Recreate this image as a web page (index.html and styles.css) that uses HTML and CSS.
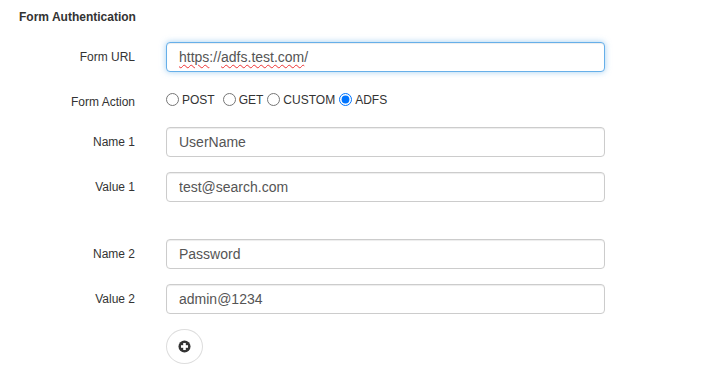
FILE: index.html
```html
<!DOCTYPE html>
<html>
<head>
    <title>Form Authentication</title>
    <link rel="stylesheet" href="styles.css">
</head>
<body>
    <div class="panel">
        <h4 class="panel-title">Form Authentication</h4>

        <div class="form-row">
            <label class="control-label">Form URL</label>
            <div class="form-control focused">
                <span class="misspelled">https</span>://<span class="misspelled">adfs.test.com</span>/
            </div>
        </div>

        <div class="form-row radio-row">
            <label class="control-label action-label">Form Action</label>
            <div class="radios">
                <label class="radio-inline"><input type="radio" name="action"> POST</label>
                <label class="radio-inline"><input type="radio" name="action">GET</label>
                <label class="radio-inline"><input type="radio" name="action">CUSTOM</label>
                <label class="radio-inline"><input type="radio" name="action" checked>ADFS</label>
            </div>
        </div>

        <div class="form-row">
            <label class="control-label">Name 1</label>
            <input class="form-control" type="text" value="UserName">
        </div>
        <div class="form-row pair-end">
            <label class="control-label">Value 1</label>
            <input class="form-control" type="text" value="test@search.com">
        </div>

        <div class="form-row">
            <label class="control-label">Name 2</label>
            <input class="form-control" type="text" value="Password">
        </div>
        <div class="form-row">
            <label class="control-label">Value 2</label>
            <input class="form-control" type="text" value="admin@1234">
        </div>

        <div class="form-row">
            <span></span>
            <div>
                <button class="add-button" type="button">
                    <svg width="13" height="13" viewBox="0 0 14 14">
                        <circle cx="7" cy="7" r="6.5" fill="#333"/>
                        <rect x="5.6" y="3.2" width="2.8" height="7.6" fill="#fff"/>
                        <rect x="3.2" y="5.6" width="7.6" height="2.8" fill="#fff"/>
                    </svg>
                </button>
            </div>
        </div>
    </div>
</body>
</html>
```

FILE: styles.css
```css
body {
    margin: 0;
    padding: 0;
    background: #fff;
    font-family: "Liberation Sans", Arial, sans-serif;
    color: #333;
}

.panel {
    padding: 8px 0 0 19px;
}

.panel-title {
    margin: 0 0 16px;
    font-size: 12px;
    line-height: 18px;
    font-weight: bold;
}

.form-row {
    display: grid;
    grid-template-columns: 116px 439px;
    column-gap: 31px;
    align-items: center;
    margin-bottom: 15px;
}

.pair-end {
    margin-bottom: 37px;
}

.control-label {
    text-align: right;
    font-size: 12px;
}

.form-control {
    box-sizing: border-box;
    width: 100%;
    height: 30px;
    padding: 0 12px;
    border: 1px solid #ccc;
    border-radius: 4px;
    font-family: "Liberation Sans", Arial, sans-serif;
    font-size: 14px;
    line-height: 28px;
    color: #555;
    background: #fff;
    box-shadow: inset 0 1px 1px rgba(0, 0, 0, 0.075);
}

.form-control.focused {
    border-color: #66afe9;
    box-shadow: inset 0 1px 1px rgba(0, 0, 0, 0.075), 0 0 6px rgba(102, 175, 233, 0.6);
}

.misspelled {
    text-decoration: underline wavy #e33;
    text-decoration-thickness: 1px;
    text-underline-offset: 2px;
}

.radio-row {
    height: 25px;
}

.action-label {
    padding-top: 5px;
}

.radios {
    font-size: 12px;
    display: flex;
    align-items: center;
}

.radio-inline {
    display: inline-flex;
    align-items: center;
    margin-right: 4px;
}

.radio-inline:first-child {
    margin-right: 8px;
}

.radio-inline input {
    margin: 0 3px 0 0;
    width: 13px;
    height: 13px;
}

.add-button {
    width: 37px;
    height: 35px;
    border-radius: 50%;
    border: 1px solid #ddd;
    background: #fff;
    padding: 0;
    display: flex;
    align-items: center;
    justify-content: center;
    cursor: pointer;
}
```
